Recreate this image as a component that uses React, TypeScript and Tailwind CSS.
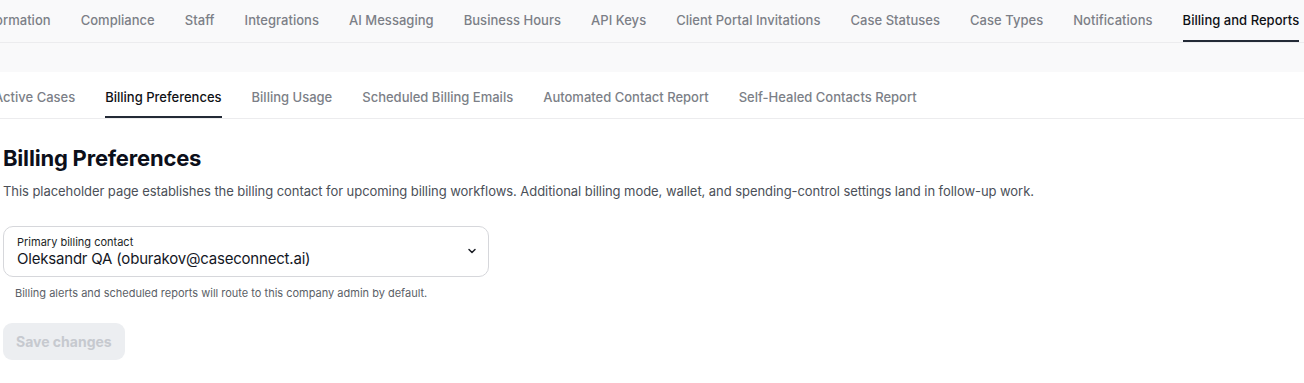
import React from "react";

const topTabs = [
  "Information",
  "Compliance",
  "Staff",
  "Integrations",
  "AI Messaging",
  "Business Hours",
  "API Keys",
  "Client Portal Invitations",
  "Case Statuses",
  "Case Types",
  "Notifications",
  "Billing and Reports",
];

const subTabs = [
  "Active Cases",
  "Billing Preferences",
  "Billing Usage",
  "Scheduled Billing Emails",
  "Automated Contact Report",
  "Self-Healed Contacts Report",
];

export default function App() {
  return (
    <div
      className="w-[1304px] h-[383px] overflow-hidden bg-white"
      style={{ fontFamily: "Inter, 'Noto Sans', sans-serif" }}
    >
      <div className="bg-[#f9f9fa]">
        <div className="h-[43px] border-b border-[#ececee] flex">
          <div className="flex gap-[30px] -ml-[21px] whitespace-nowrap">
            {topTabs.map((t) => {
              const active = t === "Billing and Reports";
              return (
                <div
                  key={t}
                  className={
                    "h-[42px] flex items-center text-[13px] font-medium border-b-2 tracking-[0.03px] " +
                    (active
                      ? "text-[#0f1115] border-[#232a36]"
                      : "text-[#7c7f87] border-transparent")
                  }
                >
                  <span className="pt-[1px]">{t}</span>
                </div>
              );
            })}
          </div>
        </div>
        <div className="h-[29px]" />
      </div>
      <div className="h-[47px] border-b border-[#ececee] flex">
        <div className="flex gap-[30px] -ml-[6px] whitespace-nowrap">
          {subTabs.map((t) => {
            const active = t === "Billing Preferences";
            return (
              <div
                key={t}
                className={
                  "h-[46px] flex items-center text-[13px] font-medium border-b-2 " +
                  (active
                    ? "text-[#0f1115] border-[#232a36]"
                    : "text-[#7c7f87] border-transparent")
                }
              >
                <span className="pt-[7px]">{t}</span>
              </div>
            );
          })}
        </div>
      </div>
      <div className="pl-[3px] pt-[25px]">
        <h1 className="text-[22px] leading-[28px] font-bold text-[#0c0f1a] tracking-[-0.2px]">
          Billing Preferences
        </h1>
        <p className="mt-[9px] text-[13px] leading-[20px] text-[#4b5058] tracking-[-0.06px]">
          This placeholder page establishes the billing contact for upcoming billing workflows. Additional billing mode, wallet, and spending-control settings land in follow-up work.
        </p>
        <div className="mt-[25px] w-[486px] h-[51px] rounded-[10px] border border-[#d6d7db] flex items-center justify-between pl-[13px] pr-[10px]">
          <div className="flex flex-col">
            <span className="text-[11px] leading-[14px] text-[#1c1f26]">Primary billing contact</span>
            <span className="text-[15px] leading-[20px] text-[#14171f] tracking-[-0.2px]">
              Oleksandr QA (oburakov@caseconnect.ai)
            </span>
          </div>
          <svg width="12" height="12" viewBox="0 0 24 24" fill="none" stroke="#1c1f26" strokeWidth="3" strokeLinecap="round" strokeLinejoin="round" className="-mt-[2px]">
            <path d="M6 9l6 6 6-6" />
          </svg>
        </div>
        <p className="mt-[9px] pl-[12px] text-[11px] leading-[14px] text-[#5b5f67]">
          Billing alerts and scheduled reports will route to this company admin by default.
        </p>
        <button className="mt-[23px] h-[37px] px-[13px] rounded-[9px] bg-[#eceef1] text-[#c6c9cf] text-[14px] font-bold">
          Save changes
        </button>
      </div>
    </div>
  );
}
